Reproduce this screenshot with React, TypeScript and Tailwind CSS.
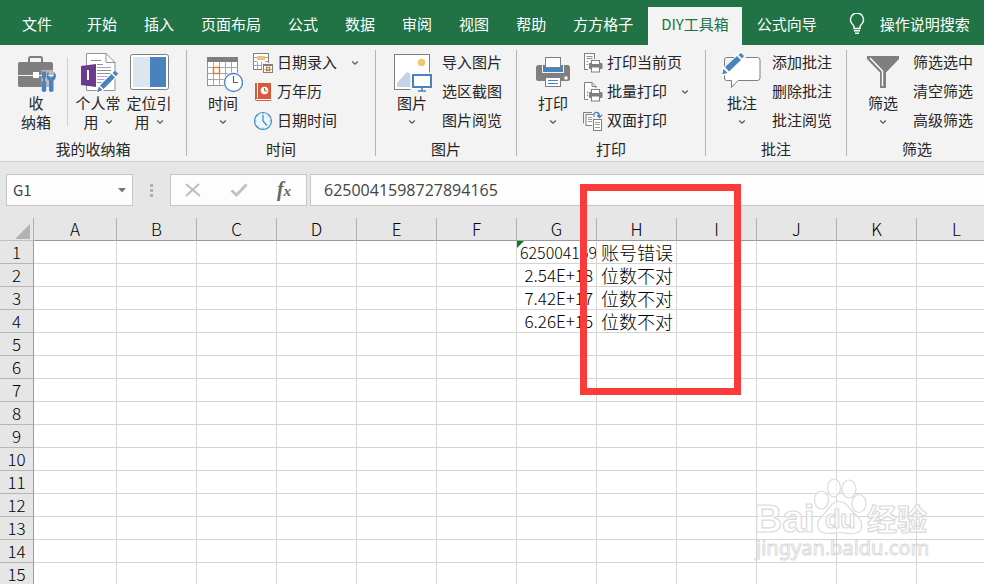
import type { ReactNode } from "react";

const tabs = ["开始", "插入", "页面布局", "公式", "数据", "审阅", "视图", "帮助", "方方格子", "DIY工具箱", "公式向导"];
const columns = ["A", "B", "C", "D", "E", "F", "G", "H", "I", "J", "K", "L"];
const rowNumbers = Array.from({ length: 15 }, (_, i) => i + 1);
const values: Record<string, string> = {
  G1: "6250041598727894165",
  G2: "2.54E+18",
  G3: "7.42E+17",
  G4: "6.26E+15",
  H1: "账号错误",
  H2: "位数不对",
  H3: "位数不对",
  H4: "位数不对",
};

const GRAY = "#7f7f7f";
const BLUE = "#4a82bd";

function Big({ children }: { children: ReactNode }) {
  return (
    <svg width="40" height="40" viewBox="0 0 40 40" className="shrink-0" fill="none" aria-hidden="true">
      {children}
    </svg>
  );
}

function Small({ children }: { children: ReactNode }) {
  return (
    <svg width="20" height="20" viewBox="0 0 20 20" className="shrink-0" fill="none" aria-hidden="true">
      {children}
    </svg>
  );
}

function Chevron() {
  return (
    <svg width="8" height="6" viewBox="0 0 8 6" fill="none" className="shrink-0" aria-hidden="true">
      <path d="M1.2 1.5 4 4.2 6.8 1.5" stroke="#555" strokeWidth="1.2" />
    </svg>
  );
}

const ToolboxIcon = () => (
  <Big>
    <path d="M13 9V5.5Q13 4 14.500 4H24.500Q26 4 26 5.500V9" stroke={GRAY} strokeWidth="2" />
    <rect x="2" y="9" width="35" height="25" rx="2" fill={GRAY} />
    <path d="M2 22.500H37" stroke="#f3f3f3" strokeWidth="1" />
    <path d="M25.500 17H40V40H25.500z" fill="#f3f3f3" opacity=".5" />
    <path d="M24.500 34H40V40H24.500z" fill="#f3f3f3" />
    <rect x="17" y="19" width="6" height="6" fill="#fff" />
    <path d="M26 18.500h4v6l-1 1v3h1.200v9.500q-2.200 2-4.400 0V28.500H27v-3l-1-1z" fill={BLUE} />
    <path d="M32.500 18.500v4.500l2.500 1.800 2.500-1.800v-4.500q2.500 1.500 2.500 4.500 0 3-2.500 4.500V38q-2.500 2-4.500 0V27.500q-2.500-1.500-2.500-4.500 0-3 2-4.500z" fill={BLUE} />
  </Big>
);

const PersonalIcon = () => (
  <Big>
    <path d="M8.500.500H28L37 9.500V37.500H8.500z" fill="#fff" stroke="#919191" />
    <path d="M28 .500V9.500H37" stroke="#919191" />
    <path d="M13 7.500H23" stroke="#919191" />
    <path d="M19 11.500H25M19 17.500H33M19 20.500H33M19 29.500H27" stroke="#919191" />
    <path d="M19 14.500H33M19 23.500H32M19 26.500H29" stroke="#b79bd0" />
    <path d="M3 13 18 11V34L3 32z" fill="#6b3a8c" />
    <path d="M10 17V27" stroke="#fff" strokeWidth="2" />
    <path d="M18 40 20 33 36 17 41 22 25 38z" fill="#fff" />
    <path d="M18.800 39.200 21 33.500 24.500 37z" fill={BLUE} />
    <path d="M22 32.500 33.500 21 37 24.500 25.500 36z" fill={BLUE} />
    <path d="M34.500 20 37 17.500 40 20.500 38 23.500z" fill={BLUE} />
  </Big>
);

const LocateIcon = () => (
  <Big>
    <rect x="1.500" y="1.500" width="38" height="35" rx="2" fill="#fff" stroke={GRAY} />
    <path d="M4 4H21V34H4z" fill="#dce6f1" />
    <path d="M21 4H37V34H21z" fill={BLUE} />
  </Big>
);

const TimeIcon = () => (
  <Big>
    <rect x="4.500" y="6.500" width="30" height="26" fill="#fff" stroke="#919191" />
    <path d="M10.500 9V33M16.500 9V33M22.500 9V33M28.500 9V33M4 14.500H35M4 20.500H35M4 26.500H35" stroke="#a6a6a6" />
    <path d="M4 4H35V9H4z" fill={GRAY} />
    <rect x="10.500" y="14.500" width="6" height="6" fill="#fff" stroke="#e07a26" strokeWidth="1.400" />
    <circle cx="30.500" cy="29.500" r="10.500" fill="#f3f3f3" />
    <circle cx="30.500" cy="29.500" r="9" fill="#fff" stroke={BLUE} strokeWidth="1.300" />
    <path d="M30.500 23V29.500H35" stroke="#666" strokeWidth="1.200" />
  </Big>
);

const PictureIcon = () => (
  <Big>
    <rect x="2.500" y="1.500" width="35" height="35" fill="#fff" stroke={GRAY} />
    <circle cx="29.500" cy="9.500" r="3.700" fill="#f0c673" />
    <path d="M5 34V30L14 20Q15.500 18.500 17 20L22 25V34z" fill="#c3d4ea" />
    <path d="M18.500 19.500H40V40H18.500z" fill="#f3f3f3" />
    <path d="M18.500 19.500H37V36H18.500z" fill="#fff" />
    <rect x="21" y="22" width="18" height="12" fill="#fff" stroke={BLUE} strokeWidth="2" />
    <path d="M30 35V38M26 38H34" stroke={BLUE} strokeWidth="1.500" />
  </Big>
);

const PrinterIcon = () => (
  <Big>
    <rect x="3" y="12" width="34" height="16" rx="2.500" fill={GRAY} />
    <path d="M9 11H31V20H9z" fill="#f3f3f3" />
    <path d="M10 12H30V19H10z" fill={BLUE} />
    <rect x="12.500" y="4.500" width="15" height="10" fill="#fff" stroke={GRAY} />
    <path d="M31.500 23.500H34.500V26.500H31.500z" fill="#fff" />
    <rect x="12.500" y="24.500" width="15" height="9" fill="#fff" stroke={GRAY} />
    <path d="M15 27.500H25M15 30.500H25" stroke={BLUE} strokeWidth="1.200" />
  </Big>
);

const CommentIcon = () => (
  <Big>
    <path d="M4.500 4.500H35.500Q38 4.500 38 7V25Q38 27.500 35.500 27.500H16L9.500 34.500V27.500H4.500Q2.500 27.500 2.500 25V7Q2.500 4.500 4.500 4.500z" fill="#fff" stroke={GRAY} />
    <path d="M-1 23 1 13 16-1 24 4 6 21.500z" fill="#fff" />
    <path d="M0 15 1 3.500H14L3 14z" fill="#f3f3f3" />
    <path d="M2.500 13V7Q2.500 4.500 4.500 4.500H12" stroke={GRAY} />
    <path d="M.300 21.200 1.500 16 5.500 20z" fill={BLUE} />
    <path d="M3 14 15 3 19 7 7 18.500z" fill={BLUE} />
    <path d="M16.500 2 19 0 22 3 20 5.500z" fill={BLUE} />
  </Big>
);

const FunnelIcon = () => (
  <Big>
    <path d="M4 3H36V6L23 19.500V35H17V19.500L4 6z" fill={GRAY} />
    <path d="M7 5 19.500 18V33" stroke="#fff" strokeWidth="1.400" />
  </Big>
);

const DateEntryIcon = () => (
  <Small>
    <rect x=".500" y=".500" width="15" height="16" fill="#fff" stroke={GRAY} />
    <path d="M.500 4.500H4M.500 8.500H4M.500 12.500H11M12 4.500H15M12 8.500H15M4.500 9V16M8.500 9V16" stroke="#a6a6a6" />
    <path d="M4 3H12V7H4z" fill="#ecc478" />
    <path d="M9 10H20V20H9z" fill="#f3f3f3" />
    <rect x="10.500" y="11.500" width="9" height="8" fill="#fff" stroke={GRAY} />
    <path d="M10 12H20" stroke={GRAY} strokeWidth="2" />
    <path d="M13.500 13V19M17 13V19M11 16.500H19" stroke="#aaa" strokeWidth=".800" />
    <rect x="13.500" y="14.500" width="3" height="3" stroke="#e07a26" strokeWidth="1.200" />
  </Small>
);

const AlmanacIcon = () => (
  <Small>
    <path d="M2 1H18V19H4Q2 19 2 17z" fill="#d65b3c" />
    <path d="M4.500 1V16M3 17.500H18" stroke="#fff" strokeWidth="1" />
    <circle cx="11.500" cy="8.500" r="3.800" fill="#fff" />
    <path d="M11.500 6V9H14" stroke="#d65b3c" />
  </Small>
);

const ClockIcon = () => (
  <Small>
    <circle cx="10" cy="10" r="8.500" fill="#eef6fc" stroke="#3f8fca" strokeWidth="1.200" />
    <path d="M10 4V10L14 14.500" stroke="#3f8fca" strokeWidth="1.300" />
    <path d="M10 2V3.500M10 16.500V18M2 10H3.500M16.500 10H18M4.400 4.400l1 1M15.600 4.400l-1 1M4.400 15.600l1-1" stroke="#3f8fca" strokeWidth=".700" />
  </Small>
);

const MiniPrinter = () => (
  <g>
    <path d="M5 6H20V20H5z" fill="#f3f3f3" />
    <rect x="6" y="10" width="13.500" height="6" rx="1" fill={GRAY} />
    <rect x="8.500" y="7.500" width="8" height="4" fill="#fff" stroke={GRAY} />
    <rect x="8.500" y="14" width="8" height="5" fill="#fff" stroke={GRAY} />
  </g>
);

const PrintPageIcon = () => (
  <Small>
    <rect x="1.500" y=".500" width="10" height="16" fill="#fff" stroke={GRAY} />
    <path d="M3.500 3.500H9.500M3.500 5.500H9.500M3.500 8.500H6M3.500 11.500H6" stroke={GRAY} strokeWidth=".900" />
    <MiniPrinter />
  </Small>
);

const BatchPrintIcon = () => (
  <Small>
    <path d="M1.500 .500H9L13 4.500V17.500H1.500z" fill="#fff" stroke={GRAY} />
    <path d="M9 .500V4.500H13" stroke={GRAY} />
    <path d="M4 10.500H6M4 13.500H5" stroke={GRAY} strokeWidth="1.500" />
    <MiniPrinter />
  </Small>
);

const DuplexIcon = () => (
  <Small>
    <path d="M.500 12.500V1.500H9" stroke={GRAY} />
    <rect x="3" y="3.500" width="8" height="11" fill="#fff" stroke={GRAY} />
    <path d="M5 6.500H9M5 8.500H9M5 10.500H9" stroke={GRAY} strokeWidth=".800" />
    <path d="M9 6H20V20H9z" fill="#f3f3f3" />
    <rect x="10.500" y="8.500" width="8" height="11" fill="#fff" stroke={GRAY} />
    <path d="M12 11.500H17M12 13.500H17M12 16.500H17" stroke={GRAY} strokeWidth=".800" />
    <path d="M10.500 3.500Q11.500 1 14 1.500 16.500 2 16.500 6M14 4 16.500 6.500 19 4" stroke={BLUE} strokeWidth="1.300" />
  </Small>
);

function BigButton({ icon, lines, arrow }: { icon: ReactNode; lines: string[]; arrow?: "inline" | "below" }) {
  return (
    <button type="button" className="flex w-[46px] flex-col items-center pt-[5px]">
      {icon}
      {lines.map((line, i) => (
        <span key={line} className="flex h-[19px] items-center gap-[6px] leading-[19px] whitespace-nowrap">
          {line}
          {arrow === "inline" && i === lines.length - 1 && <Chevron />}
        </span>
      ))}
      {arrow === "below" && (
        <span className="flex h-[19px] items-center">
          <Chevron />
        </span>
      )}
    </button>
  );
}

function SmallList({ items }: { items: { text: string; icon?: ReactNode; arrow?: boolean }[] }) {
  return (
    <div className="ml-[7px] flex flex-col items-start">
      {items.map((item) => (
        <button key={item.text} type="button" className="flex h-[29px] items-center gap-1 whitespace-nowrap">
          {item.icon}
          {item.text}
          {item.arrow && (
            <span className="ml-2 flex w-3 justify-center">
              <Chevron />
            </span>
          )}
        </button>
      ))}
    </div>
  );
}

function Group({ title, children, last }: { title: string; children: ReactNode; last?: boolean }) {
  return (
    <>
      <section aria-label={title} className={last ? "flex flex-1 shrink-0 flex-col pt-[3px]" : "flex shrink-0 flex-col pt-[3px]"}>
        <div className="flex h-[87px] items-start pr-[14px] pl-[13px]">{children}</div>
        <div className="pt-[3px] text-center leading-[22px]">{title}</div>
      </section>
      {!last && <div className="my-[5px] w-px shrink-0 bg-[#b5b5b5]" />}
    </>
  );
}

function Ribbon() {
  return (
    <div className="flex h-[117px] shrink-0 overflow-hidden border-b border-[#d0d0d0] bg-[#f3f3f3] text-[15px] text-[#262626]">
      <Group title="我的收纳箱">
        <BigButton icon={<ToolboxIcon />} lines={["收", "纳箱"]} />
        <div className="mt-[9px] mr-[7px] ml-2 h-[69px] w-px bg-[#d0d0d0]" />
        <div className="flex gap-[5px]">
          <BigButton icon={<PersonalIcon />} lines={["个人常", "用"]} arrow="inline" />
          <BigButton icon={<LocateIcon />} lines={["定位引", "用"]} arrow="inline" />
        </div>
      </Group>
      <Group title="时间">
        <BigButton icon={<TimeIcon />} lines={["时间"]} arrow="below" />
        <SmallList
          items={[
            { text: "日期录入", icon: <DateEntryIcon />, arrow: true },
            { text: "万年历", icon: <AlmanacIcon /> },
            { text: "日期时间", icon: <ClockIcon /> },
          ]}
        />
      </Group>
      <Group title="图片">
        <BigButton icon={<PictureIcon />} lines={["图片"]} arrow="below" />
        <SmallList items={[{ text: "导入图片" }, { text: "选区截图" }, { text: "图片阅览" }]} />
      </Group>
      <Group title="打印">
        <BigButton icon={<PrinterIcon />} lines={["打印"]} arrow="below" />
        <SmallList
          items={[
            { text: "打印当前页", icon: <PrintPageIcon /> },
            { text: "批量打印", icon: <BatchPrintIcon />, arrow: true },
            { text: "双面打印", icon: <DuplexIcon /> },
          ]}
        />
      </Group>
      <Group title="批注">
        <BigButton icon={<CommentIcon />} lines={["批注"]} arrow="below" />
        <SmallList items={[{ text: "添加批注" }, { text: "删除批注" }, { text: "批注阅览" }]} />
      </Group>
      <Group title="筛选" last>
        <BigButton icon={<FunnelIcon />} lines={["筛选"]} arrow="below" />
        <SmallList items={[{ text: "筛选选中" }, { text: "清空筛选" }, { text: "高级筛选" }]} />
      </Group>
    </div>
  );
}

function FormulaBar() {
  return (
    <div className="flex h-8 shrink-0 pl-[6px]">
      <div className="flex w-[127px] items-center border border-[#c6c6c6] bg-[#fdfdfd]">
        <input aria-label="名称框" defaultValue="G1" className="w-0 flex-1 bg-transparent pl-[6px] text-[15px] text-[#444] outline-none" />
        <button type="button" aria-label="名称列表" className="flex w-5 justify-center">
          <svg width="8" height="5" viewBox="0 0 8 5" aria-hidden="true">
            <path d="M0 0H8L4 4.500z" fill="#777" />
          </svg>
        </button>
      </div>
      <div className="flex w-[37px] flex-col items-center justify-center gap-[2px]">
        <span className="size-[3px] bg-[#b0b0b0]" />
        <span className="size-[3px] bg-[#b0b0b0]" />
        <span className="size-[3px] bg-[#b0b0b0]" />
      </div>
      <div className="flex w-[137px] items-center justify-between border border-[#c6c6c6] bg-[#fdfdfd] px-3">
        <button type="button" aria-label="取消" className="flex w-5 justify-center">
          <svg width="16" height="14" viewBox="0 0 16 14" fill="none" aria-hidden="true">
            <path d="M1 1 15 13M14 1 1 13" stroke="#bdbdbd" strokeWidth="2" />
          </svg>
        </button>
        <button type="button" aria-label="输入" className="flex w-5 justify-center">
          <svg width="18" height="14" viewBox="0 0 18 14" fill="none" aria-hidden="true">
            <path d="M1.500 7.500 6.500 12 16.500 1.500" stroke="#c2c2c2" strokeWidth="3" />
          </svg>
        </button>
        <button type="button" aria-label="插入函数" className="w-5 font-['Liberation_Serif',serif] text-[20px] leading-6 font-bold text-[#666] italic">
          f<span className="text-[15px]">x</span>
        </button>
      </div>
      <input
        aria-label="编辑栏"
        defaultValue="6250041598727894165"
        className="ml-[3px] w-0 flex-1 border border-r-0 border-[#c6c6c6] bg-[#fdfdfd] pl-[13px] font-['Open_Sans','Noto_Sans',sans-serif] text-[16px] text-[#444] outline-none"
      />
    </div>
  );
}

function Sheet() {
  return (
    <table className="mt-3 w-[997px] shrink-0 table-fixed border-separate border-spacing-0 text-black">
      <colgroup>
        <col className="w-[34px]" />
        {columns.map((c) => (
          <col key={c} className={c === "A" ? "w-[83px]" : "w-[80px]"} />
        ))}
      </colgroup>
      <thead>
        <tr className="h-[23px]">
          <th aria-label="全选" className="border-r border-b border-[#b0b0b0] border-b-[#c0c0c0] p-0">
            <svg width="15" height="15" viewBox="0 0 15 15" className="mt-1 ml-[15px] block" aria-hidden="true">
              <path d="M15 0V15H0z" fill="#b2b2b2" />
            </svg>
          </th>
          {columns.map((c) => (
            <th key={c} className="border-r border-b border-r-[#b0b0b0] border-b-[#999] p-0 text-[17px] leading-[22px] font-light">
              {c}
            </th>
          ))}
        </tr>
      </thead>
      <tbody>
        {rowNumbers.map((r) => (
          <tr key={r} className="h-[23px]">
            <th scope="row" className="border-r border-b border-r-[#999] border-b-[#b5b5b5] p-0 text-[17px] leading-[22px] font-light">
              {r}
            </th>
            {columns.map((c) => {
              const key = c + r;
              return (
                <td key={key} className="border-r border-b border-[#d4d4d4] bg-white p-0">
                  {values[key] && (
                    <div
                      className={
                        c === "H"
                          ? "overflow-hidden pl-1 text-[18px] leading-[22px] font-light whitespace-nowrap"
                          : key === "G1"
                            ? "relative overflow-hidden pl-[3px] text-[16px] leading-[22px] font-light whitespace-nowrap"
                            : "overflow-hidden pr-[3px] text-right text-[17px] leading-[22px] font-light whitespace-nowrap"
                      }
                    >
                      {values[key]}
                      {key === "G1" && (
                        <svg width="7" height="7" viewBox="0 0 7 7" className="absolute top-0 left-0" aria-hidden="true">
                          <path d="M0 0H7L0 7z" fill="#0a7d1c" />
                        </svg>
                      )}
                    </div>
                  )}
                </td>
              );
            })}
          </tr>
        ))}
      </tbody>
    </table>
  );
}

function Watermark() {
  return (
    <svg
      width="184"
      height="90"
      viewBox="0 0 184 90"
      className="pointer-events-none absolute top-[475px] left-[750px]"
      fill="#fff"
      fillOpacity=".6"
      stroke="#dadada"
      strokeWidth="1.200"
      fontFamily="'Liberation Sans', 'Noto Sans CJK SC', sans-serif"
      aria-hidden="true"
    >
      <ellipse cx="71.500" cy="25" rx="7" ry="9" />
      <ellipse cx="84" cy="13" rx="6.500" ry="9" />
      <ellipse cx="99" cy="14" rx="7" ry="9" />
      <ellipse cx="109" cy="28.500" rx="7" ry="9" />
      <path d="M89 26.500C97 26.500 99 34 106 40 113 46 115 57 104 58.500 98 59.500 95 57.500 90 57.500 84 57.500 80 59.500 74 58 66 56 66 47 72 41 79 35 81 26.500 89 26.500z" />
      <text x="4" y="57" fontSize="39" fontWeight="bold">Bai</text>
      <text x="75" y="53" fontSize="25" fontWeight="bold">du</text>
      <text x="117" y="55" fontSize="30" fontWeight="bold">经验</text>
      <text x="6" y="80" fontSize="20" fontFamily="'Noto Sans', sans-serif" strokeWidth="1">jingyan.baidu.com</text>
    </svg>
  );
}

export default function App() {
  return (
    <div className="relative flex h-screen flex-col overflow-hidden bg-[#e6e6e6] font-['Noto_Sans_CJK_SC',sans-serif]">
      <nav className="flex h-[45px] shrink-0 items-end gap-[3px] overflow-hidden bg-[#217346] text-[15px] text-white">
        <button type="button" className="h-[38px] shrink-0 pr-5 pb-1 pl-[22px]">文件</button>
        {tabs.map((tab) => (
          <button
            key={tab}
            type="button"
            className={
              tab === "DIY工具箱"
                ? "h-[38px] shrink-0 bg-[#f3f3f3] px-[13px] pb-1 text-[#217346]"
                : "h-[38px] shrink-0 px-3 pb-1"
            }
          >
            {tab}
          </button>
        ))}
        <button type="button" className="ml-[16px] flex h-[38px] shrink-0 items-center gap-[14px] pb-1">
          <svg width="18" height="22" viewBox="0 0 18 22" fill="none" stroke="#fff" strokeWidth="1.400" aria-hidden="true">
            <path d="M6 15.500V13.500Q5.500 12 3.800 10.500A6.500 6.500 0 1 1 14.200 10.500Q12.500 12 12 13.500V15.500z" />
            <path d="M6 17.800H12M7 20.300H11" />
          </svg>
          操作说明搜索
        </button>
      </nav>
      <Ribbon />
      <div className="flex flex-col pt-3">
        <FormulaBar />
        <Sheet />
      </div>
      <Watermark />
      <div className="pointer-events-none absolute top-[184px] left-[580px] h-[211px] w-[161px] border-[7px] border-[#fb3a3a]" />
    </div>
  );
}
